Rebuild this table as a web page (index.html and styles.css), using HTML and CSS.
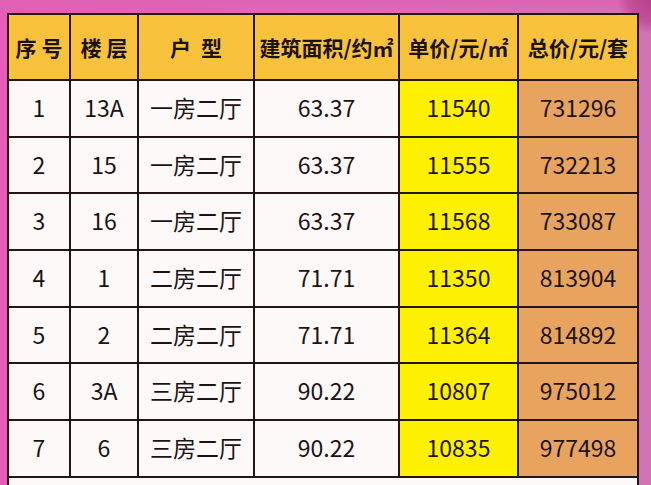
FILE: index.html
```html
<!DOCTYPE html>
<html lang="zh">
<head>
<meta charset="utf-8">
<link rel="stylesheet" href="styles.css">
</head>
<body>
<div class="frame">
  <table class="price">
    <colgroup>
      <col class="c1"><col class="c2"><col class="c3"><col class="c4"><col class="c5"><col class="c6">
    </colgroup>
    <thead>
      <tr>
        <th class="spaced">序号</th>
        <th class="spaced">楼层</th>
        <th class="wide">户型</th>
        <th>建筑面积/约㎡</th>
        <th>单价/元/㎡</th>
        <th>总价/元/套</th>
      </tr>
    </thead>
    <tbody>
      <tr><td>1</td><td>13A</td><td>一房二厅</td><td>63.37</td><td class="unit">11540</td><td class="total">731296</td></tr>
      <tr><td>2</td><td>15</td><td>一房二厅</td><td>63.37</td><td class="unit">11555</td><td class="total">732213</td></tr>
      <tr><td>3</td><td>16</td><td>一房二厅</td><td>63.37</td><td class="unit">11568</td><td class="total">733087</td></tr>
      <tr><td>4</td><td>1</td><td>二房二厅</td><td>71.71</td><td class="unit">11350</td><td class="total">813904</td></tr>
      <tr><td>5</td><td>2</td><td>二房二厅</td><td>71.71</td><td class="unit">11364</td><td class="total">814892</td></tr>
      <tr><td>6</td><td>3A</td><td>三房二厅</td><td>90.22</td><td class="unit">10807</td><td class="total">975012</td></tr>
      <tr><td>7</td><td>6</td><td>三房二厅</td><td>90.22</td><td class="unit">10835</td><td class="total">977498</td></tr>
      <tr class="extra"><td colspan="6"></td></tr>
    </tbody>
  </table>
</div>
</body>
</html>
```

FILE: styles.css
```css
html, body {
  margin: 0;
  padding: 0;
}
body {
  width: 651px;
  height: 485px;
  overflow: hidden;
  background: linear-gradient(90deg, #e65cb8 0%, #e06ab8 50%, #d274b4 100%);
  font-family: "Noto Sans CJK SC", "Noto Sans", sans-serif;
}
.frame {
  padding: 13px 0 0 7px;
  background:
    radial-gradient(circle at 100% 0%, #b8408c 0, #c4509a 22px, rgba(0,0,0,0) 34px),
    linear-gradient(180deg, #dc62b2 0, rgba(0,0,0,0) 14px);
  height: 485px;
  box-sizing: border-box;
}
.price {
  border-collapse: collapse;
  table-layout: fixed;
  width: 630px;
  color: #1c1212;
}
.c1 { width: 62px; }
.c2 { width: 68px; }
.c3 { width: 116px; }
.c4 { width: 145px; }
.c5 { width: 119px; }
.c6 { width: 120px; }
.price th, .price td {
  border: 2px solid #241414;
  text-align: center;
  padding: 0;
  white-space: nowrap;
  overflow: hidden;
}
.price th {
  background: #f8c23c;
  height: 64px;
  font-size: 21px;
  font-weight: 700;
  letter-spacing: 0;
}
.price th.spaced {
  letter-spacing: 5px;
  text-indent: 5px;
}
.price th.wide {
  letter-spacing: 10px;
  text-indent: 10px;
}
.price td {
  background: #fdf9f9;
  height: 52.7px;
  font-size: 23px;
  font-weight: 400;
  line-height: 1;
  padding-bottom: 2px;
}
.price td.unit {
  background: #fdf000;
}
.price td.total {
  background: #e8a45e;
}
.price tr.extra td {
  height: 40px;
}
```
